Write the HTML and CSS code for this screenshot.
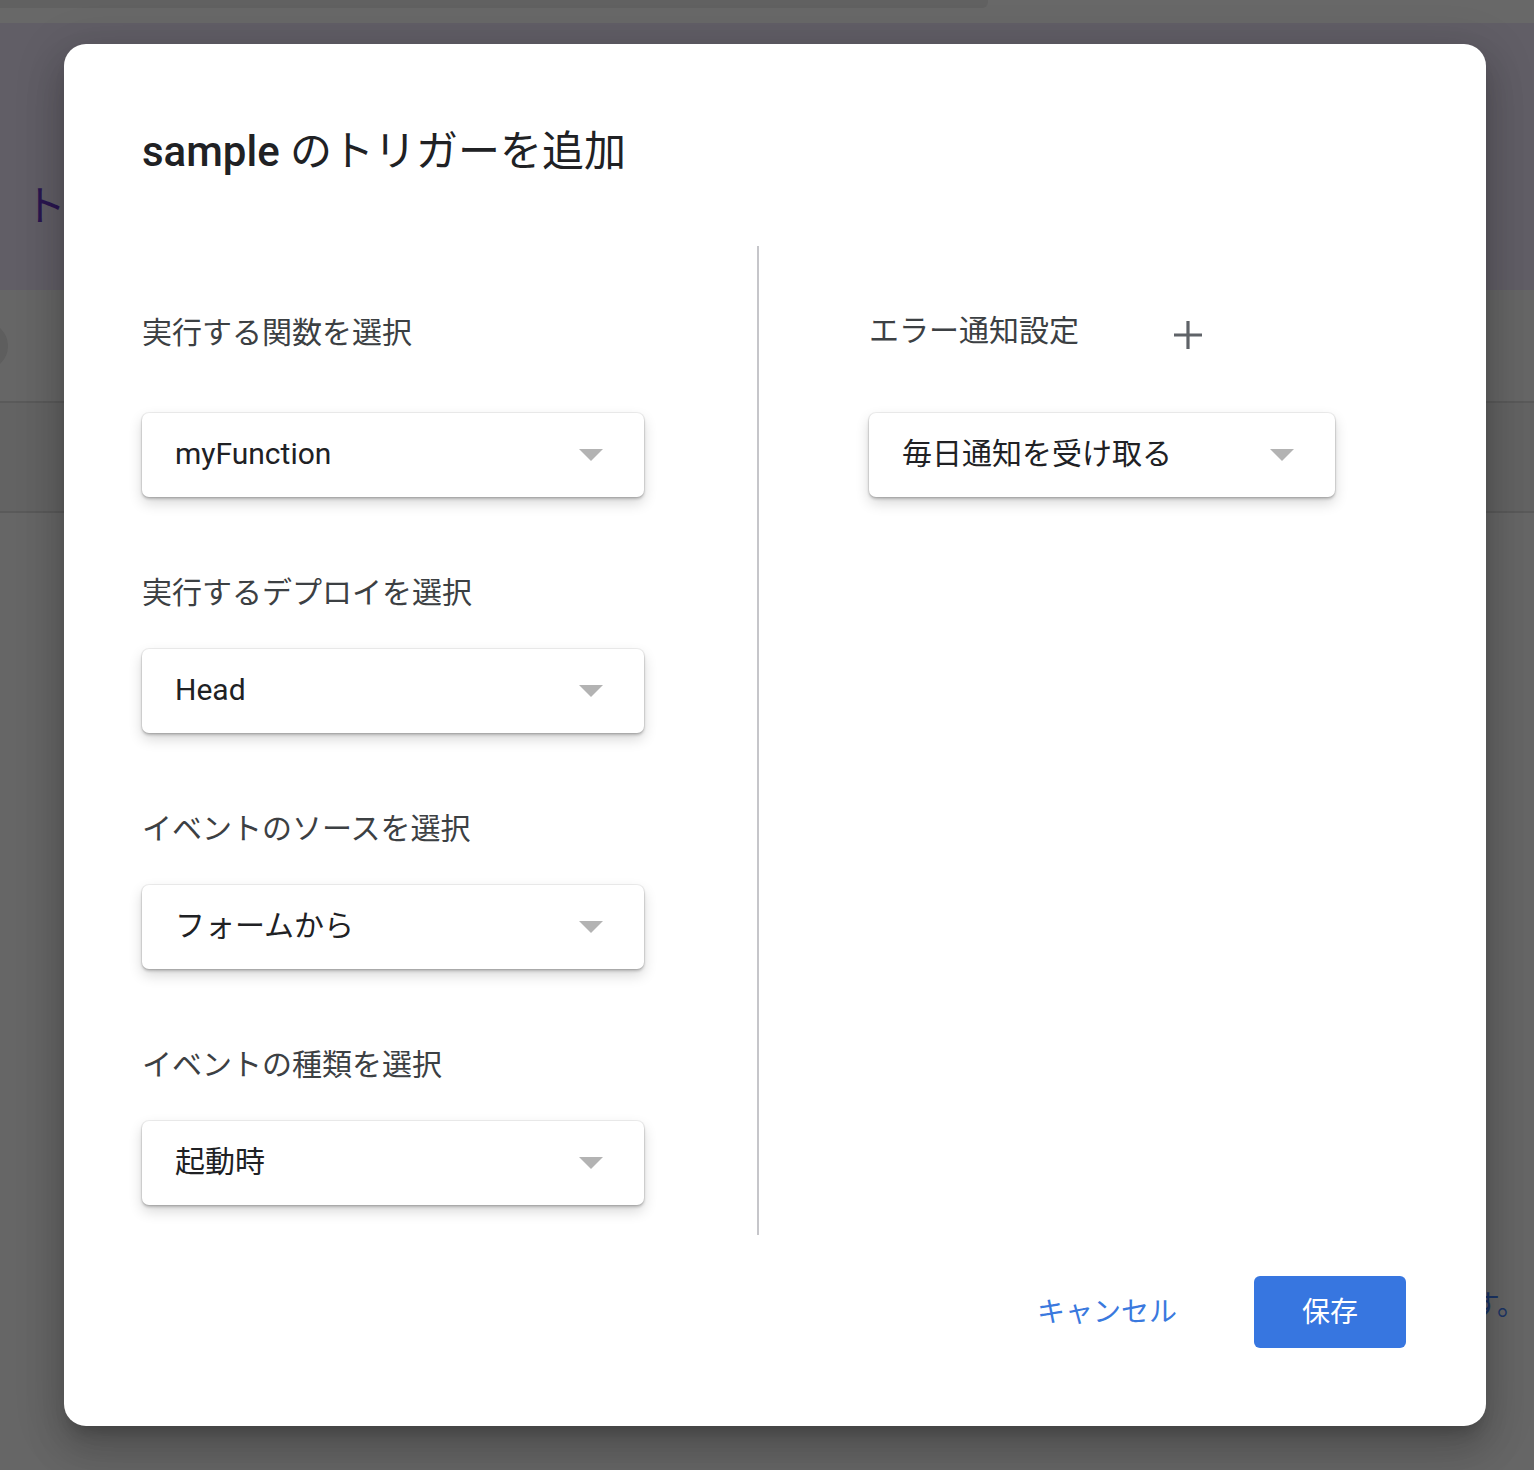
FILE: index.html
```html
<!DOCTYPE html>
<html lang="ja">
<head>
<meta charset="utf-8">
<title>sample のトリガーを追加</title>
<link rel="stylesheet" href="styles.css">
</head>
<body>
<div class="page">
  <div class="topstrip"><div class="topstrip-bar"></div></div>
  <header class="page-header">
    <h1 class="page-title">トリガー</h1>
  </header>
  <div class="toolbar"><span class="toolbar-circle"></span></div>
  <div class="table-head"></div>
  <div class="table-body">
    <p class="note">す。</p>
  </div>
</div>

<div class="dialog" role="dialog" aria-labelledby="dlg-title">
  <h2 class="dialog-title" id="dlg-title"><span class="fn">sample</span> のトリガーを追加</h2>

  <div class="dialog-body">
    <div class="col col-left">
      <div class="field field-first">
        <div class="label">実行する関数を選択</div>
        <div class="select"><span class="select-value">myFunction</span><span class="caret"></span></div>
      </div>
      <div class="field">
        <div class="label">実行するデプロイを選択</div>
        <div class="select"><span class="select-value">Head</span><span class="caret"></span></div>
      </div>
      <div class="field">
        <div class="label">イベントのソースを選択</div>
        <div class="select"><span class="select-value">フォームから</span><span class="caret"></span></div>
      </div>
      <div class="field">
        <div class="label">イベントの種類を選択</div>
        <div class="select"><span class="select-value">起動時</span><span class="caret"></span></div>
      </div>
    </div>
    <div class="divider"></div>
    <div class="col col-right">
      <div class="field field-first">
        <div class="label-row">
          <div class="label">エラー通知設定</div>
          <svg class="plus" width="32" height="32" viewBox="0 0 32 32" aria-hidden="true"><path d="M16 2v28M2 16h28" stroke="#5f6368" stroke-width="3.2" fill="none"/></svg>
        </div>
        <div class="select select-narrow"><span class="select-value">毎日通知を受け取る</span><span class="caret"></span></div>
      </div>
    </div>
  </div>

  <div class="dialog-actions">
    <button class="btn btn-text" type="button">キャンセル</button>
    <button class="btn btn-primary" type="button">保存</button>
  </div>
</div>
</body>
</html>
```

FILE: styles.css
```css
html, body {
  margin: 0;
  padding: 0;
}
body {
  width: 1534px;
  height: 1470px;
  overflow: hidden;
  background: #666666;
  font-family: "Roboto", "Noto Sans CJK JP", sans-serif;
  position: relative;
}

/* ---------- dimmed page behind ---------- */
.page {
  display: flex;
  flex-direction: column;
}
.topstrip {
  height: 23px;
  background: #686868;
}
.topstrip-bar {
  width: 988px;
  height: 8px;
  background: #616161;
  border-bottom-right-radius: 6px;
}
.page-header {
  height: 267px;
  background: #615e66;
  box-sizing: border-box;
  padding: 155px 0 0 24px;
}
.page-title {
  margin: 0;
  font-weight: 400;
  font-size: 42px;
  line-height: 50px;
  color: #2a1650;
  font-family: "Noto Sans CJK JP", sans-serif;
}
.toolbar {
  height: 111px;
  background: #666666;
  border-bottom: 2px solid #5a5a5a;
  display: flex;
  align-items: center;
}
.toolbar-circle {
  width: 48px;
  height: 48px;
  margin-left: -40px;
  border-radius: 50%;
  background: #5e5e5e;
}
.table-head {
  height: 108px;
  background: #636363;
  border-bottom: 2px solid #5a5a5a;
}
.table-body {
  height: 900px;
  box-sizing: border-box;
  padding-top: 770px;
  display: flex;
  justify-content: flex-end;
}
.note {
  margin: 0 9px 0 0;
  font-family: "Noto Sans CJK JP", sans-serif;
  font-size: 28px;
  line-height: 40px;
  color: #1c3566;
  white-space: nowrap;
}

/* ---------- dialog ---------- */
.dialog {
  position: absolute;
  left: 64px;
  top: 44px;
  width: 1422px;
  height: 1382px;
  box-sizing: border-box;
  background: #ffffff;
  border-radius: 22px;
  padding: 87px 80px 78px 78px;
  display: flex;
  flex-direction: column;
  box-shadow: 0 24px 38px 3px rgba(0,0,0,0.14), 0 9px 46px 8px rgba(0,0,0,0.12), 0 11px 15px -7px rgba(0,0,0,0.2);
}
.dialog-title {
  margin: 0;
  font-size: 42px;
  line-height: 42px;
  font-weight: 400;
  color: #202124;
  font-family: "Roboto", "Noto Sans CJK JP", sans-serif;
}
.dialog-title .fn {
  font-weight: 500;
}

.dialog-body {
  margin-top: 73px;
  display: flex;
  align-items: stretch;
}
.col-left {
  width: 615px;
  padding: 69px 0 30px 0;
  display: flex;
  flex-direction: column;
}
.divider {
  width: 2px;
  background: #c6c6ca;
}
.col-right {
  padding: 67px 0 0 110px;
  display: flex;
  flex-direction: column;
}
.field {
  display: flex;
  flex-direction: column;
}
.field + .field {
  margin-top: 78px;
}
.label {
  font-size: 30px;
  line-height: 30px;
  color: #3c4043;
  font-family: "Noto Sans CJK JP", sans-serif;
  white-space: nowrap;
}
.label-row {
  display: flex;
  align-items: center;
  height: 30px;
  gap: 93px;
}
.plus {
  display: block;
  margin-top: 14px;
}
.select {
  margin-top: 44px;
  width: 502px;
  height: 84px;
  box-sizing: border-box;
  padding: 0 41px 0 33px;
  display: flex;
  align-items: center;
  justify-content: space-between;
  background: #ffffff;
  border-radius: 7px;
  box-shadow: 0 0 0 1px rgba(0,0,0,0.06), 0 2px 3px rgba(0,0,0,0.22), 0 6px 14px rgba(0,0,0,0.16);
}
.field-first .select {
  margin-top: 68px;
}
.col-right .field-first .select {
  margin-top: 70px;
}
.select-narrow {
  width: 466px;
}
.select-value {
  font-size: 30px;
  line-height: 30px;
  margin-top: -3px;
  color: #202124;
  font-family: "Roboto", "Noto Sans CJK JP", sans-serif;
  white-space: nowrap;
}
.caret {
  width: 0;
  height: 0;
  border-left: 12px solid transparent;
  border-right: 12px solid transparent;
  border-top: 12px solid #b3b3b3;
}

.dialog-actions {
  margin-top: 41px;
  display: flex;
  justify-content: flex-end;
  align-items: center;
  gap: 77px;
}
.btn {
  font-family: "Noto Sans CJK JP", sans-serif;
  font-size: 28px;
  line-height: 28px;
  border: none;
  cursor: pointer;
  padding: 0 0 4px 0;
  background: none;
}
.btn-text {
  color: #3a79de;
  height: 72px;
}
.btn-primary {
  width: 152px;
  height: 72px;
  border-radius: 6px;
  background: #3776e0;
  color: #ffffff;
}
```
